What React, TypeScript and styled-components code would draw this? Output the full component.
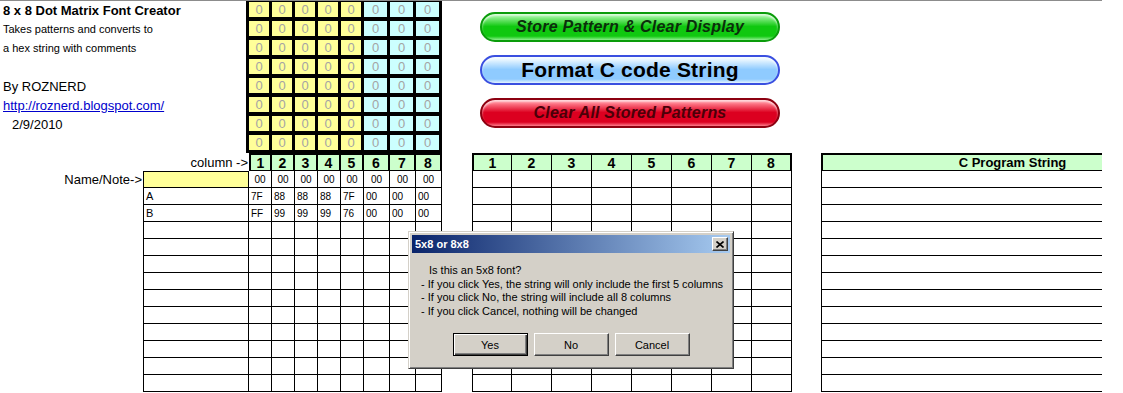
import React from 'react';
import styled, { createGlobalStyle } from 'styled-components';

const GlobalStyle = createGlobalStyle`
  html, body {
    margin: 0;
    padding: 0;
    background: #fff;
  }
  body {
    font-family: "Liberation Sans", Arial, sans-serif;
    color: #000;
  }
  * { box-sizing: border-box; }
`;

const COLS = '23px 23px 23px 23px 23px 26px 26px 26px';

const nums = ['1', '2', '3', '4', '5', '6', '7', '8'];

const rows = [
  { label: 'Name/Note->', name: '', yellow: true, center: true, vals: ['00', '00', '00', '00', '00', '00', '00', '00'] },
  { label: '', name: 'A', vals: ['7F', '88', '88', '88', '7F', '00', '00', '00'] },
  { label: '', name: 'B', vals: ['FF', '99', '99', '99', '76', '00', '00', '00'] },
  ...Array.from({ length: 10 }, () => ({ label: '', name: '', vals: ['', '', '', '', '', '', '', ''] })),
] as { label: string; name: string; yellow?: boolean; center?: boolean; vals: string[] }[];

const Page = styled.div`
  position: relative;
  width: 1123px;
  height: 393px;
  overflow: hidden;
`;

const Top = styled.div`
  display: flex;
  height: 153px;
  width: 1102px;
  border-top: 1px solid #8c8c8c;
`;

const Info = styled.div`
  width: 246px;
  padding-left: 3px;
`;

const Title = styled.div`
  font-weight: bold;
  font-size: 13px;
  line-height: 19px;
`;

const Small = styled.div`
  font-size: 11px;
  line-height: 19px;
`;

const Big = styled.div<{ $indent?: number; $gap?: number }>`
  font-size: 13px;
  line-height: 19px;
  padding-left: ${p => p.$indent || 0}px;
  margin-top: ${p => p.$gap || 0}px;
`;

const Link = styled.a`
  font-size: 13px;
  color: #0000cc;
  text-decoration: underline;
`;

const DotGrid = styled.div`
  display: grid;
  grid-template-columns: repeat(5, 20px) repeat(3, 23px);
  grid-auto-rows: 15px;
  column-gap: 3px;
  row-gap: 4px;
  padding: 1px 3px 3px 3px;
  width: 196px;
  height: 152px;
  background: #000;
`;

const Dot = styled.div<{ $cyan?: boolean }>`
  background: ${p => (p.$cyan ? '#ccffff' : '#ffff99')};
  color: #a4a4a4;
  font-family: "Liberation Sans Narrow", "Liberation Sans", Arial, sans-serif;
  font-size: 13px;
  display: flex;
  align-items: center;
  justify-content: center;
`;

const Buttons = styled.div`
  margin-left: 38px;
  padding-top: 11px;
  display: flex;
  flex-direction: column;
  gap: 13px;
`;

const Glossy = styled.div<{ $base: string; $light: string; $edge: string; $ink: string; $size: number; $italic?: boolean }>`
  width: 300px;
  height: 30px;
  border-radius: 15px;
  border: 2px solid ${p => p.$edge};
  background: linear-gradient(
    to bottom,
    ${p => p.$light} 0%,
    ${p => p.$light} 12%,
    ${p => p.$base} 48%,
    ${p => p.$base} 85%,
    ${p => p.$light} 100%
  );
  box-shadow: inset 0 2px 2px rgba(255, 255, 255, 0.7);
  display: flex;
  align-items: center;
  justify-content: center;
  color: ${p => p.$ink};
  font-size: ${p => p.$size}px;
  font-weight: bold;
  font-style: ${p => (p.$italic ? 'italic' : 'normal')};
  letter-spacing: 0.2px;
`;

const Bottom = styled.div`
  display: flex;
  height: 239px;
`;

const LeftSheet = styled.div`
  display: grid;
  grid-template-columns: 143px 106px ${COLS};
  grid-template-rows: 18px repeat(13, 17px);
`;

const MidSheet = styled.div`
  margin-left: 30px;
  display: grid;
  grid-template-columns: repeat(8, 40px);
  grid-template-rows: 18px repeat(13, 17px);
`;

const RightSheet = styled.div`
  margin-left: 29px;
  width: 281px;
  display: grid;
  grid-template-rows: 18px repeat(13, 17px);
`;

const Label = styled.div`
  font-size: 13px;
  display: flex;
  align-items: center;
  justify-content: flex-end;
  padding-right: 1px;
  white-space: nowrap;
`;

const Head = styled.div<{ $first?: boolean; $last?: boolean; $thick?: number }>`
  background: #ccffcc;
  border-top: 2px solid #000;
  border-bottom: 1px solid #000;
  border-right: ${p => (p.$last ? 2 : p.$thick || 1)}px solid #000;
  border-left: ${p => (p.$first ? 2 : 0)}px solid #000;
  font-family: "Liberation Sans Narrow", "Liberation Sans", Arial, sans-serif;
  font-weight: bold;
  font-size: 14px;
  display: flex;
  align-items: center;
  justify-content: center;
`;

const WideHead = styled(Head)`
  border-right: 0;
  font-family: "Liberation Sans", Arial, sans-serif;
  font-size: 13px;
  padding-left: 100px;
`;

const Cell = styled.div<{ $left?: boolean; $top?: boolean; $bg?: string; $center?: boolean; $size?: number; $noRight?: boolean }>`
  background: ${p => p.$bg || '#fff'};
  border-right: ${p => (p.$noRight ? 0 : 1)}px solid #000;
  border-bottom: 1px solid #000;
  border-left: ${p => (p.$left ? 1 : 0)}px solid #000;
  border-top: ${p => (p.$top ? 1 : 0)}px solid #000;
  font-size: ${p => p.$size || 10}px;
  display: flex;
  align-items: center;
  justify-content: ${p => (p.$center ? 'center' : 'flex-start')};
  padding-left: ${p => (p.$center ? 0 : 2)}px;
  overflow: hidden;
  white-space: nowrap;
`;

const Dialog = styled.div`
  position: absolute;
  left: 408px;
  top: 231px;
  width: 326px;
  height: 138px;
  background: #d4d0c8;
  border: 1px solid;
  border-color: #d4d0c8 #404040 #404040 #d4d0c8;
  box-shadow: inset 1px 1px #fff, inset -1px -1px #808080;
  padding: 3px;
  font-size: 11px;
`;

const TitleBar = styled.div`
  height: 18px;
  background: linear-gradient(to right, #0a246a, #a6caf0);
  display: flex;
  align-items: center;
  justify-content: space-between;
  padding: 0 2px 0 3px;
  color: #fff;
  font-weight: bold;
  font-size: 11px;
`;

const CloseBtn = styled.div`
  width: 16px;
  height: 14px;
  background: #d4d0c8;
  border: 1px solid;
  border-color: #fff #404040 #404040 #fff;
  box-shadow: inset -1px -1px #808080;
  display: flex;
  align-items: center;
  justify-content: center;
`;

const Message = styled.div`
  padding: 11px 0 0 9px;
  line-height: 13.5px;
`;

const Line = styled.div<{ $indent?: number }>`
  padding-left: ${p => p.$indent || 0}px;
  white-space: nowrap;
`;

const DlgButtons = styled.div`
  display: flex;
  justify-content: center;
  gap: 6px;
  margin-top: 15px;
`;

const DlgButton = styled.div<{ $default?: boolean }>`
  width: 75px;
  height: 23px;
  background: #d4d0c8;
  border: 1px solid;
  border-color: ${p => (p.$default ? '#000' : '#fff #404040 #404040 #fff')};
  box-shadow: ${p =>
    p.$default
      ? 'inset 1px 1px #fff, inset -1px -1px #404040, inset -2px -2px #808080'
      : 'inset -1px -1px #808080'};
  display: flex;
  align-items: center;
  justify-content: center;
  font-size: 11px;
`;

export default function App() {
  return (
    <Page>
      <GlobalStyle />
      <Top>
        <Info>
          <Title>8 x 8 Dot Matrix Font Creator</Title>
          <Small>Takes patterns and converts to</Small>
          <Small>a hex string with comments</Small>
          <Big $gap={19}>By ROZNERD</Big>
          <Big>
            <Link href="#">http://roznerd.blogspot.com/</Link>
          </Big>
          <Big $indent={9}>2/9/2010</Big>
        </Info>

        <DotGrid>
          {Array.from({ length: 64 }, (_, i) => (
            <Dot key={i} $cyan={i % 8 >= 5}>0</Dot>
          ))}
        </DotGrid>

        <Buttons>
          <Glossy $base="#10c810" $light="#8ef08e" $edge="#0a9c0a" $ink="#0b2e0b" $size={16} $italic>
            Store Pattern &amp; Clear Display
          </Glossy>
          <Glossy $base="#8fcbff" $light="#e4f4ff" $edge="#3a4fe0" $ink="#000" $size={21}>
            Format C code String
          </Glossy>
          <Glossy $base="#dc0020" $light="#ff7d8c" $edge="#8c0010" $ink="#4a0008" $size={16} $italic>
            Clear All Stored Patterns
          </Glossy>
        </Buttons>
      </Top>

      <Bottom>
        <LeftSheet>
          <Label />
          <Label>column -&gt;</Label>
          {nums.map((n, i) => (
            <Head key={n} $first={i === 0} $last={i === 7} $thick={2}>{n}</Head>
          ))}
          {rows.map((r, ri) => (
            <React.Fragment key={ri}>
              <Label>{r.label}</Label>
              <Cell $left $top={r.yellow} $bg={r.yellow ? '#ffff99' : undefined} $size={11}>
                {r.name}
              </Cell>
              {r.vals.map((v, ci) => (
                <Cell key={ci} $center={r.center}>{v}</Cell>
              ))}
            </React.Fragment>
          ))}
        </LeftSheet>

        <MidSheet>
          {nums.map((n, i) => (
            <Head key={n} $first={i === 0} $last={i === 7}>{n}</Head>
          ))}
          {Array.from({ length: 13 * 8 }, (_, i) => (
            <Cell key={i} $left={i % 8 === 0} />
          ))}
        </MidSheet>

        <RightSheet>
          <WideHead $first>C Program String</WideHead>
          {Array.from({ length: 13 }, (_, i) => (
            <Cell key={i} $left $noRight />
          ))}
        </RightSheet>
      </Bottom>

      <Dialog>
        <TitleBar>
          <span>5x8 or 8x8</span>
          <CloseBtn>
            <svg width="8" height="7" viewBox="0 0 8 7">
              <path d="M0.5 0.5 L7.5 6.5 M7.5 0.5 L0.5 6.5" stroke="#000" strokeWidth="1.6" />
            </svg>
          </CloseBtn>
        </TitleBar>
        <Message>
          <Line $indent={8}>Is this an 5x8 font?</Line>
          <Line>- If you click Yes, the string will only include the first 5 columns</Line>
          <Line>- If you click No, the string will include all 8 columns</Line>
          <Line>- If you click Cancel, nothing will be changed</Line>
        </Message>
        <DlgButtons>
          <DlgButton $default>Yes</DlgButton>
          <DlgButton>No</DlgButton>
          <DlgButton>Cancel</DlgButton>
        </DlgButtons>
      </Dialog>
    </Page>
  );
}
